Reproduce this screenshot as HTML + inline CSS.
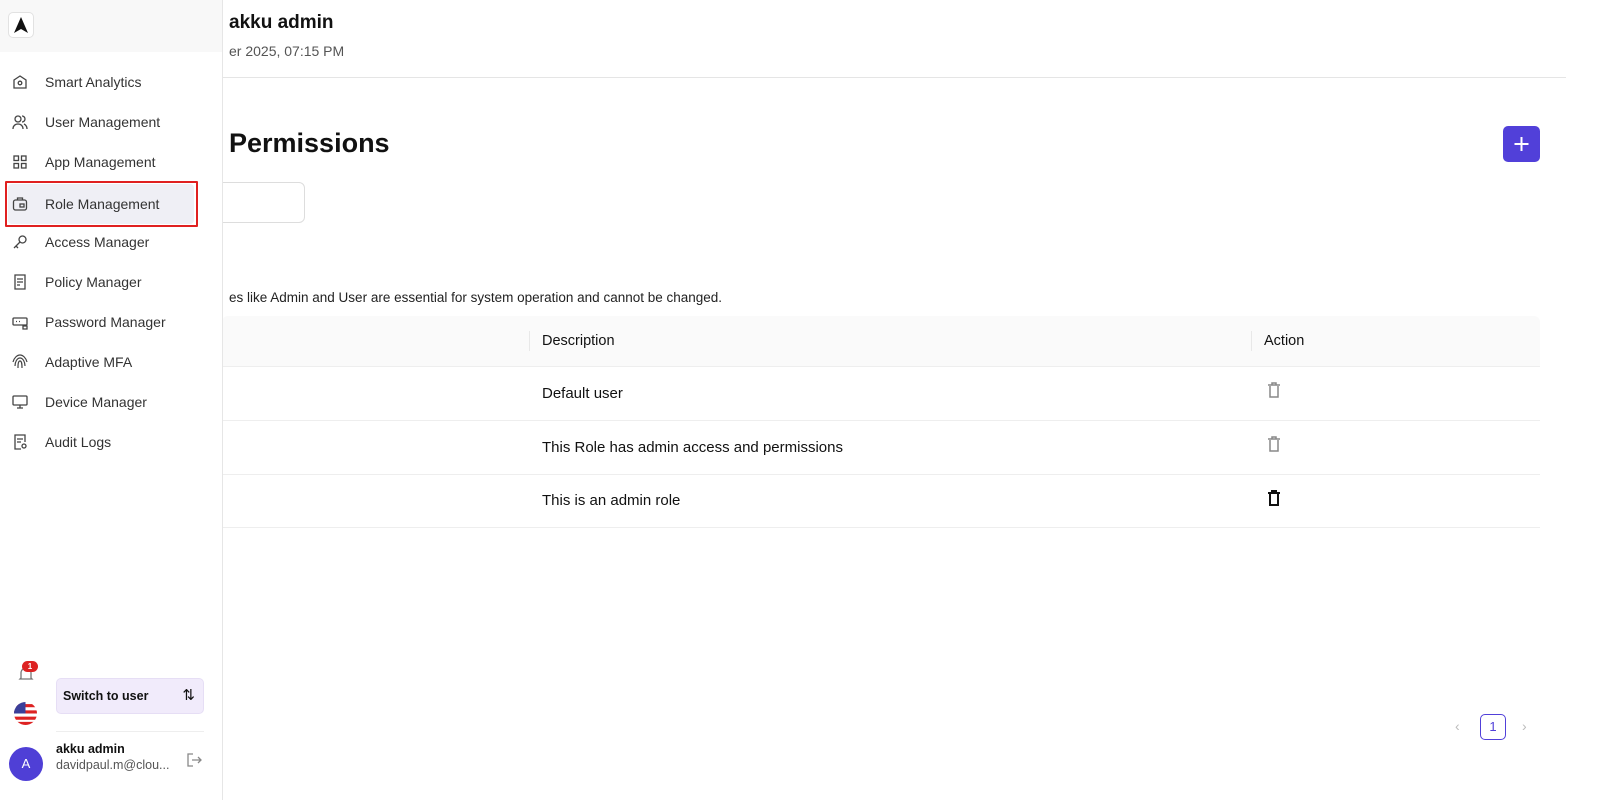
<!DOCTYPE html>
<html><head><meta charset="utf-8"><style>
*{box-sizing:border-box;margin:0;padding:0}
body{width:1600px;height:800px;overflow:hidden;background:#fff;font-family:"Liberation Sans",Arial,sans-serif;color:#111;position:relative}
.side{position:absolute;left:0;top:0;width:223px;height:800px;background:#fff;border-right:1px solid #e6e6e6;z-index:2}
.logo{height:52px;background:#f8f8f8;position:relative}
.logo .b{position:absolute;left:8px;top:12px;width:26px;height:26px;border:1px solid #e2e2e2;border-radius:5px;background:#fff}
.item{position:absolute;left:6px;width:190px;height:40px;display:flex;align-items:center;font-size:14px;color:#333}
.item svg{position:absolute;left:6px}
.item span{position:absolute;left:39px}
.sel{background:#efeff5;border-radius:4px}
.main{position:absolute;left:0;top:0;width:1600px;height:800px}
.hdr{position:absolute;left:0;top:0;width:1566px;height:78px;border-bottom:1px solid #e5e5e5}
</style></head><body>
<div class="main">
<div class="hdr">
<div style="position:absolute;left:229px;top:12px;font-size:19px;font-weight:bold">akku admin</div>
<div style="position:absolute;left:229px;top:43px;font-size:14px;color:#555">er 2025, 07:15 PM</div>
</div>
<div style="position:absolute;left:229px;top:128px;font-size:27px;font-weight:bold">Permissions</div>
<div style="position:absolute;left:1503px;top:126px;width:37px;height:36px;background:#5140d9;border-radius:5px"><svg width="37" height="36" viewBox="0 0 37 36"><path d="M18.5 11v14M11.5 18h14" stroke="#fff" stroke-width="2"/></svg></div>
<div style="position:absolute;left:180px;top:182px;width:125px;height:41px;border:1px solid #ddd;border-radius:6px"></div>
<div style="position:absolute;left:229px;top:290px;font-size:13.5px;color:#222">es like Admin and User are essential for system operation and cannot be changed.</div>
<div style="position:absolute;left:222px;top:316px;width:1318px;height:51px;background:#fafafa;border-bottom:1px solid #eee;border-radius:6px 6px 0 0"></div>
<div style="position:absolute;left:529px;top:331px;width:1px;height:20px;background:#e8e8e8"></div>
<div style="position:absolute;left:1251px;top:331px;width:1px;height:20px;background:#e8e8e8"></div>
<div style="position:absolute;left:542px;top:333px;font-size:14.5px">Description</div>
<div style="position:absolute;left:1264px;top:333px;font-size:14.5px">Action</div>
<div style="position:absolute;left:222px;top:420px;width:1318px;height:1px;background:#eee"></div>
<div style="position:absolute;left:222px;top:474px;width:1318px;height:1px;background:#eee"></div>
<div style="position:absolute;left:222px;top:527px;width:1318px;height:1px;background:#eee"></div>
<div style="position:absolute;left:542px;top:385px;font-size:15px">Default user</div>
<div style="position:absolute;left:542px;top:439px;font-size:15px">This Role has admin access and permissions</div>
<div style="position:absolute;left:542px;top:492px;font-size:15px">This is an admin role</div>
<svg style="position:absolute;left:1267px;top:382px" width="14" height="16" viewBox="0 0 14 16" fill="none" stroke="#888" stroke-width="1.5"><path d="M1 3h12M5 3V1h4v2M3 4v11h8V4"/></svg>
<svg style="position:absolute;left:1267px;top:436px" width="14" height="16" viewBox="0 0 14 16" fill="none" stroke="#888" stroke-width="1.5"><path d="M1 3h12M5 3V1h4v2M3 4v11h8V4"/></svg>
<svg style="position:absolute;left:1267px;top:490px" width="14" height="16" viewBox="0 0 14 16" fill="none" stroke="#111" stroke-width="2"><path d="M1 3h12M5 3V1h4v2M3 4v11h8V4"/></svg>
<div style="position:absolute;left:1455px;top:718px;color:#bbb;font-size:14px">&#8249;</div>
<div style="position:absolute;left:1480px;top:714px;width:26px;height:26px;border:1px solid #5140d9;border-radius:5px;color:#5140d9;font-size:13px;text-align:center;line-height:24px">1</div>
<div style="position:absolute;left:1522px;top:718px;color:#bbb;font-size:14px">&#8250;</div>
</div>
<div class="side">
<div class="logo"><div class="b"><svg width="24" height="24" viewBox="0 0 24 24"><path d="M12 4L19 20L12 16L5 20Z" fill="#111"/></svg></div></div>
<div class="item" style="top:62px"><svg width="16" height="16" viewBox="0 0 16 16" fill="none" stroke="#444" stroke-width="1.3"><path d="M2 6l6-4 6 4v8H2z"/><circle cx="8" cy="9" r="1.8"/></svg><span>Smart Analytics</span></div>
<div class="item" style="top:102px"><svg width="16" height="16" viewBox="0 0 16 16" fill="none" stroke="#444" stroke-width="1.3"><circle cx="6" cy="5" r="3"/><path d="M1 15c0-3 2-5 5-5s5 2 5 5M10 2a3 3 0 010 6M12 10c2 1 3 3 3 5"/></svg><span>User Management</span></div>
<div class="item" style="top:142px"><svg width="16" height="16" viewBox="0 0 16 16" fill="none" stroke="#444" stroke-width="1.3"><rect x="2" y="2" width="4.5" height="4.5"/><rect x="9.5" y="2" width="4.5" height="4.5"/><rect x="2" y="9.5" width="4.5" height="4.5"/><rect x="9.5" y="9.5" width="4.5" height="4.5"/></svg><span>App Management</span></div>
<div style="position:absolute;left:5px;top:181px;width:193px;height:46px;border:2px solid #e02020;border-radius:1px"></div>
<div class="item sel" style="top:184px;left:8px;width:186px"><svg width="16" height="16" viewBox="0 0 16 16" fill="none" stroke="#444" stroke-width="1.3" style="left:4px"><rect x="1.5" y="4" width="13" height="10" rx="2"/><path d="M5.5 4V2h5v2"/><rect x="8" y="8" width="4" height="3"/></svg><span style="left:37px">Role Management</span></div>
<div class="item" style="top:222px"><svg width="16" height="16" viewBox="0 0 16 16" fill="none" stroke="#444" stroke-width="1.3"><circle cx="10.5" cy="5.5" r="3.5"/><path d="M8 8l-6 6M4 12l2 2"/></svg><span>Access Manager</span></div>
<div class="item" style="top:262px"><svg width="16" height="16" viewBox="0 0 16 16" fill="none" stroke="#444" stroke-width="1.3"><path d="M3 1h10v14H3zM5 5h6M5 8h6M5 11h3"/></svg><span>Policy Manager</span></div>
<div class="item" style="top:302px"><svg width="16" height="16" viewBox="0 0 16 16" fill="none" stroke="#444" stroke-width="1.3"><rect x="1" y="4" width="14" height="7" rx="1"/><path d="M4 7.5h1M7 7.5h1M11 12h4v3h-4z"/></svg><span>Password Manager</span></div>
<div class="item" style="top:342px"><svg width="16" height="16" viewBox="0 0 16 16" fill="none" stroke="#444" stroke-width="1.2"><path d="M3 12c0-4 2-8 5-8s5 4 5 8M6 14c0-3 0-7 2-7s2 4 2 7M1 8c1-4 4-7 7-7s6 3 7 7"/></svg><span>Adaptive MFA</span></div>
<div class="item" style="top:382px"><svg width="16" height="16" viewBox="0 0 16 16" fill="none" stroke="#444" stroke-width="1.3"><rect x="1" y="2" width="14" height="9" rx="1"/><path d="M5 14h6M8 11v3"/></svg><span>Device Manager</span></div>
<div class="item" style="top:422px"><svg width="16" height="16" viewBox="0 0 16 16" fill="none" stroke="#444" stroke-width="1.3"><path d="M9 15H3V1h10v7M5 5h6M5 8h4"/><circle cx="12" cy="12" r="2"/></svg><span>Audit Logs</span></div>
<svg style="position:absolute;left:17px;top:665px" width="18" height="18" viewBox="0 0 18 18" fill="none" stroke="#777" stroke-width="1.3"><path d="M4 13V8a5 5 0 0110 0v5l1 1H3z"/></svg>
<div style="position:absolute;left:22px;top:661px;width:16px;height:11px;background:#dd2222;border-radius:6px;color:#fff;font-size:8px;font-weight:bold;text-align:center;line-height:11px">1</div>
<svg style="position:absolute;left:14px;top:702px" width="23" height="23" viewBox="0 0 22 22"><clipPath id="c"><circle cx="11" cy="11" r="11"/></clipPath><g clip-path="url(#c)"><rect width="22" height="22" fill="#fff"/><rect y="2" width="22" height="3" fill="#d22"/><rect y="8" width="22" height="3" fill="#d22"/><rect y="14" width="22" height="3" fill="#d22"/><rect y="19" width="22" height="3" fill="#d22"/><rect width="11" height="11" fill="#3a3f9a"/></g></svg>
<div style="position:absolute;left:56px;top:678px;width:148px;height:36px;background:#f1ebfb;border:1px solid #e6def5;border-radius:5px;font-size:12.5px;font-weight:bold;line-height:34px;padding-left:6px">Switch to user<span style="position:absolute;right:8px;font-weight:normal;font-size:15px">⇅</span></div>
<div style="position:absolute;left:56px;top:731px;width:148px;height:1px;background:#eee"></div>
<div style="position:absolute;left:9px;top:747px;width:34px;height:34px;border-radius:50%;background:#4f3fd6;color:#fff;font-size:13px;text-align:center;line-height:34px">A</div>
<div style="position:absolute;left:56px;top:742px;font-size:12.5px;font-weight:bold">akku admin</div>
<div style="position:absolute;left:56px;top:758px;font-size:12.5px;color:#555">davidpaul.m@clou...</div>
<svg style="position:absolute;left:186px;top:752px" width="16" height="16" viewBox="0 0 16 16" fill="none" stroke="#888" stroke-width="1.3"><path d="M7 2H2v12h5M6 8h9M12 5l3 3-3 3"/></svg>
</div>
</body></html>
